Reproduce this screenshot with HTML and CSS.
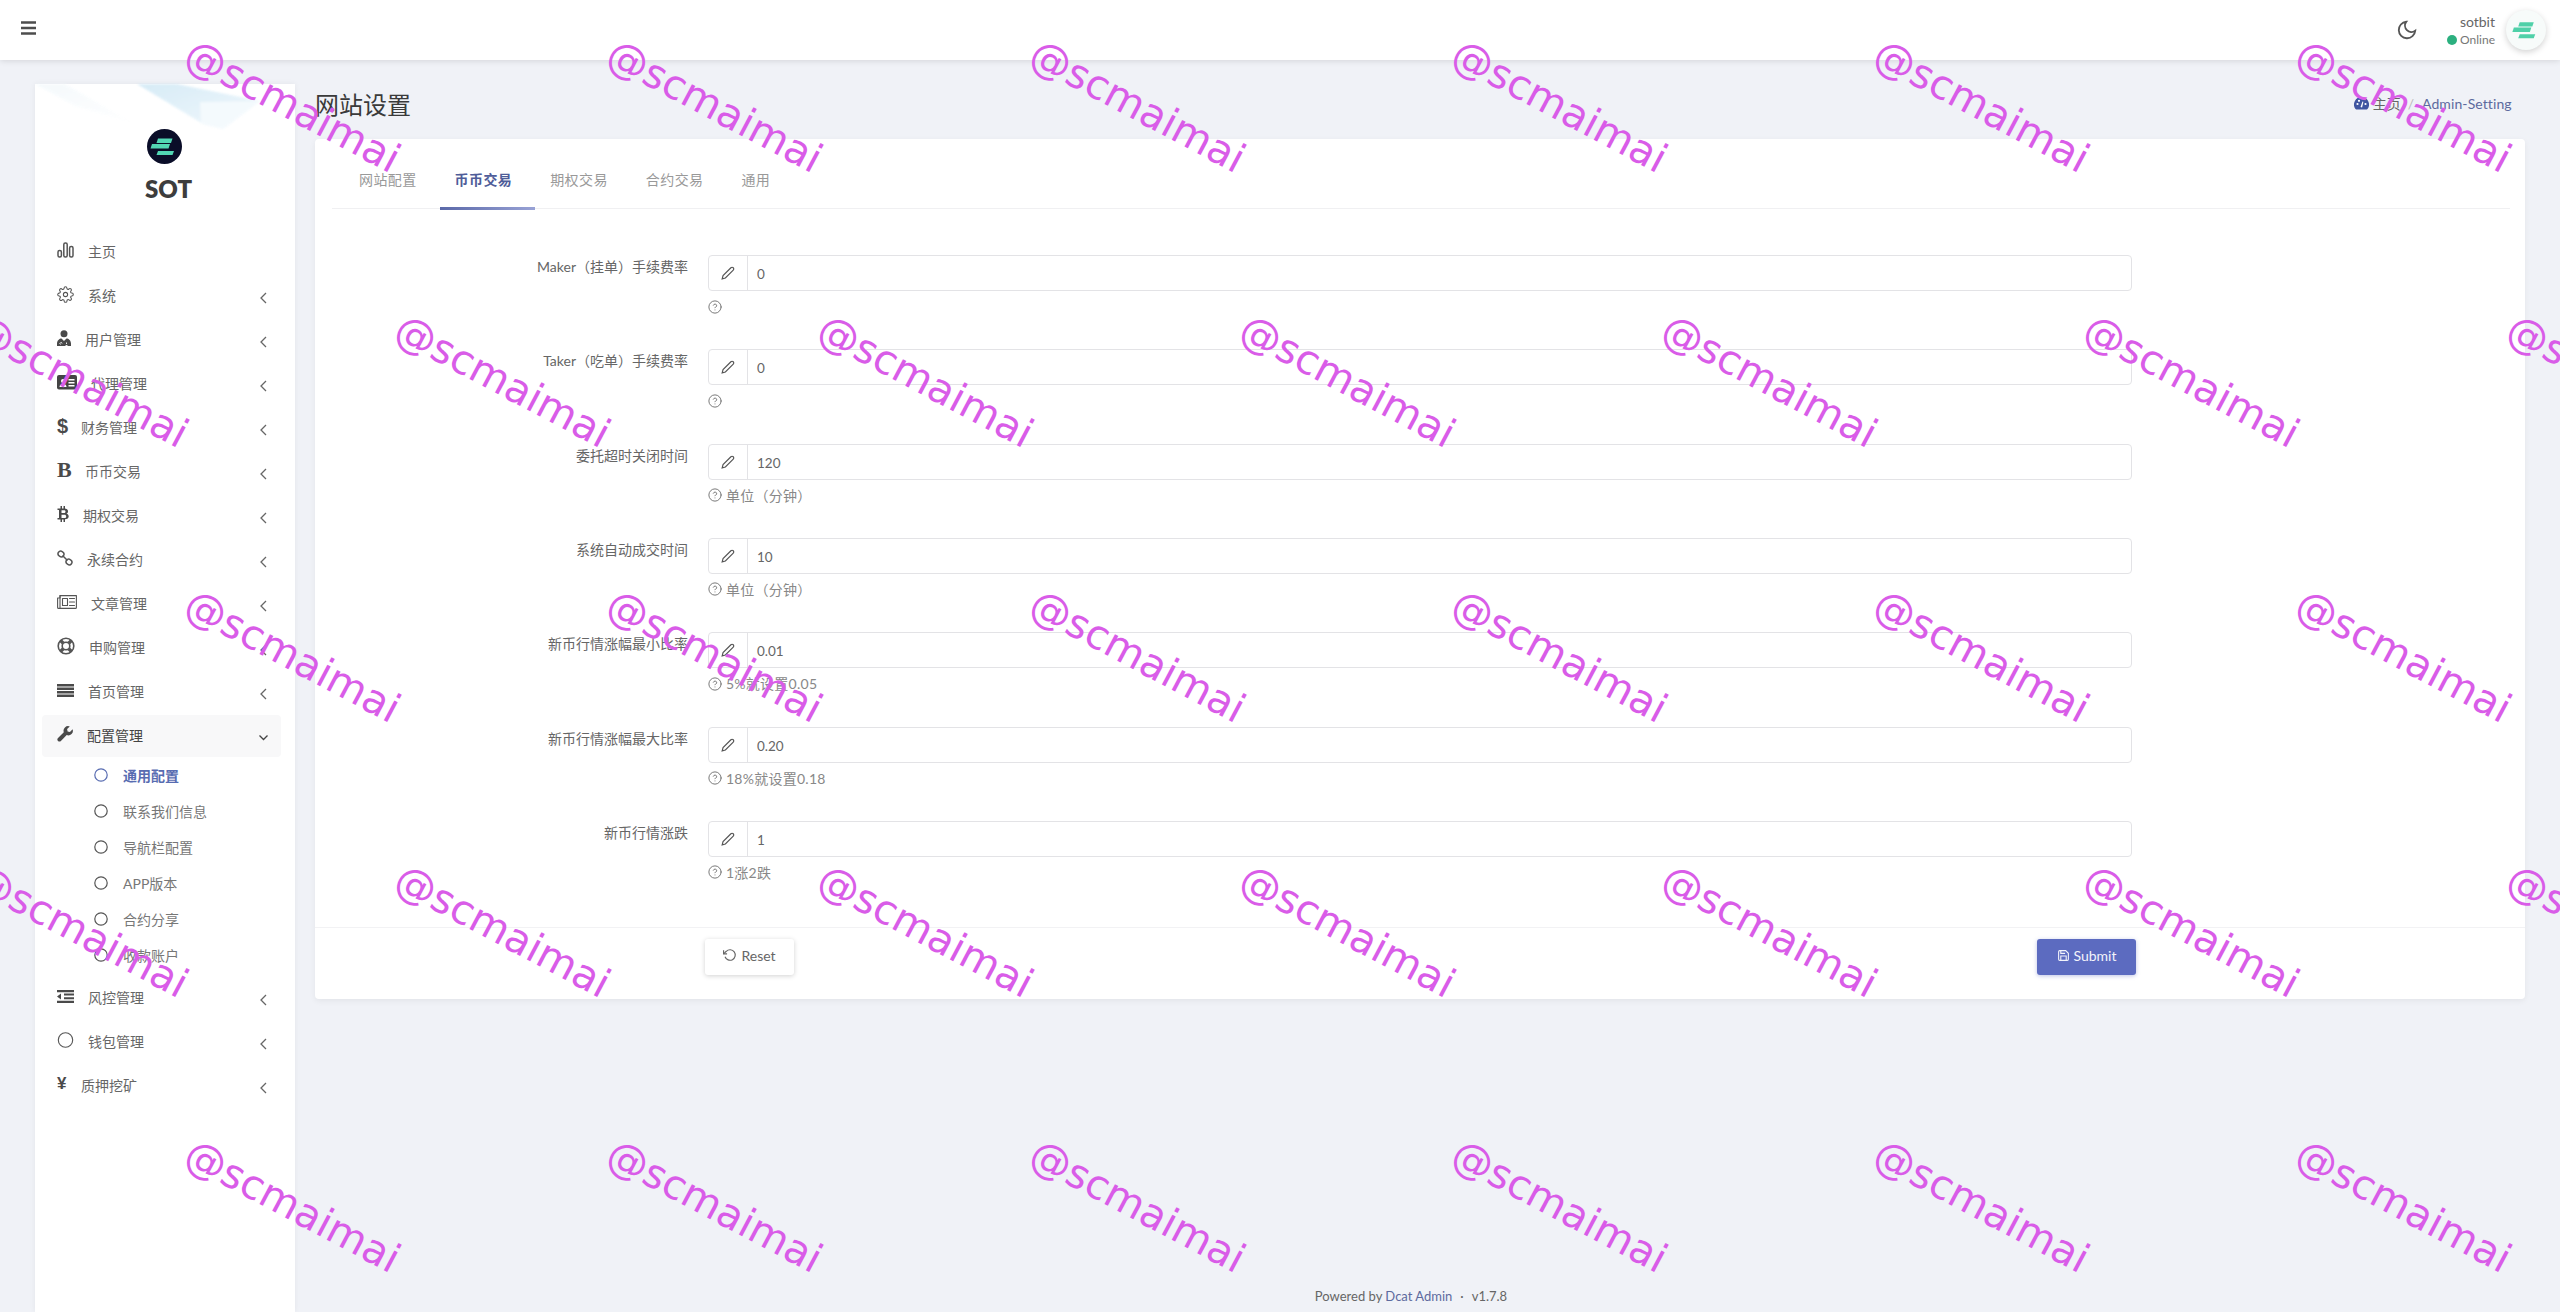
FILE: index.html
```html
<!DOCTYPE html>
<html lang="zh-CN">
<head>
<meta charset="utf-8">
<title>网站设置</title>
<link rel="stylesheet" href="styles.css">
</head>
<body>
<svg class="defs" width="0" height="0" aria-hidden="true">
  <symbol id="i-pen" viewBox="0 0 24 24"><path d="M17 3a2.828 2.828 0 1 1 4 4L7.500 20.500 2 22l1.500-5.500L17 3z"/></symbol>
  <symbol id="i-help" viewBox="0 0 24 24"><circle cx="12" cy="12" r="10.500"/><path d="M9.090 9a3 3 0 0 1 5.830 1c0 2-3 3-3 3"/><path d="M12 17h.01"/></symbol>
  <symbol id="i-left" viewBox="0 0 7 12"><path d="M6 1 1 6l5 5"/></symbol>
  <symbol id="i-ring" viewBox="0 0 14 14"><circle cx="7" cy="7" r="6.200"/></symbol>
  <symbol id="i-logo" viewBox="0 0 35 35"><path d="M11 9.500h14.500l-1.500 4.500H9.500z"/><path d="M5 15.500h18l-1.500 4.500H3.500z" transform="translate(0 -.5)"/><path d="M11 22h16l-1.500 4H9.500z"/></symbol>
</svg>

<header class="topbar">
  <svg class="burger" width="16" height="14" viewBox="0 0 16 14"><path d="M0 1.500h15M0 7h15M0 12.500h15"/></svg>
  <div class="top-right">
    <svg class="moon" width="22" height="22" viewBox="0 0 24 24"><path d="M21 12.790A9 9 0 1 1 11.210 3 7 7 0 0 0 21 12.790z"/></svg>
    <div class="user">
      <div class="user-name">sotbit</div>
      <div class="user-status"><i class="dot"></i>Online</div>
    </div>
    <div class="avatar"><svg class="avatar-logo" width="34" height="34"><use href="#i-logo"/></svg></div>
  </div>
</header>

<div class="shell">
  <aside class="sidebar">
    <svg class="wave" width="260" height="50" viewBox="0 0 260 50">
      <defs>
        <linearGradient id="wv" x1="0" y1="0" x2="1" y2="1"><stop offset="0" stop-color="#cde7f5"/><stop offset="1" stop-color="#eff7fc"/></linearGradient>
        <linearGradient id="wl" x1="0" y1="0" x2="1" y2="1"><stop offset="0" stop-color="#f3f9fc"/><stop offset="1" stop-color="#ffffff"/></linearGradient>
      </defs>
      <path d="M0 0h30l70 40L40 22z" fill="url(#wl)"/>
      <path d="M102 0h40l83 17-37 28-20-5z" fill="url(#wv)"/>
      <path d="M165 18l60-1-37 28-22-6z" fill="#f2f9fd"/>
    </svg>
    <div class="brand">
      <svg class="brand-logo" width="35" height="35" viewBox="0 0 35 35"><circle cx="17.500" cy="17.500" r="17.500" fill="#0a0d28"/><use href="#i-logo" width="35" height="35" class="teal"/></svg>
      <div class="brand-name">SOT</div>
    </div>
    <nav class="menu">
      <a class="item"><svg class="ic st" width="17" height="16" viewBox="0 0 17 16"><rect x="1" y="8.500" width="3.400" height="6.500" rx="1.500"/><rect x="6.800" y="1" width="3.400" height="14" rx="1.500"/><rect x="12.600" y="4.500" width="3.400" height="10.500" rx="1.500"/></svg><span>主页</span></a>
      <a class="item"><svg class="ic st" width="17" height="17" viewBox="0 0 24 24"><circle cx="12" cy="12" r="3"/><path d="M19.400 15a1.650 1.650 0 0 0 .33 1.820l.06.06a2 2 0 0 1 0 2.830 2 2 0 0 1-2.830 0l-.06-.06a1.650 1.650 0 0 0-1.820-.33 1.650 1.650 0 0 0-1 1.510V21a2 2 0 0 1-2 2 2 2 0 0 1-2-2v-.09A1.650 1.650 0 0 0 9 19.400a1.650 1.650 0 0 0-1.820.33l-.06.06a2 2 0 0 1-2.830 0 2 2 0 0 1 0-2.830l.06-.06a1.650 1.650 0 0 0 .33-1.820 1.650 1.650 0 0 0-1.510-1H3a2 2 0 0 1-2-2 2 2 0 0 1 2-2h.09A1.650 1.650 0 0 0 4.600 9a1.650 1.650 0 0 0-.33-1.820l-.06-.06a2 2 0 0 1 0-2.830 2 2 0 0 1 2.830 0l.06.06a1.650 1.650 0 0 0 1.820.33H9a1.650 1.650 0 0 0 1-1.510V3a2 2 0 0 1 2-2 2 2 0 0 1 2 2v.09a1.650 1.650 0 0 0 1 1.510 1.650 1.650 0 0 0 1.820-.33l.06-.06a2 2 0 0 1 2.830 0 2 2 0 0 1 0 2.830l-.06.06a1.650 1.650 0 0 0-.33 1.820V9a1.650 1.650 0 0 0 1.510 1H21a2 2 0 0 1 2 2 2 2 0 0 1-2 2h-.09a1.650 1.650 0 0 0-1.510 1z"/></svg><span>系统</span><svg class="chev" width="7" height="12"><use href="#i-left"/></svg></a>
      <a class="item"><svg class="ic fl" width="14" height="16" viewBox="0 0 14 16"><circle cx="7" cy="3.800" r="3.500"/><path d="M0 16v-2.500C0 10.500 2.500 8.500 4.500 8.500L7 11l2.500-2.500c2 0 4.500 2 4.500 5V16z"/><path d="M3.500 14.500a1 1 0 1 1 1.500-1M9.500 12.500v1.500M8.500 15.500h2" fill="none" stroke="#fff" stroke-width=".9"/></svg><span>用户管理</span><svg class="chev" width="7" height="12"><use href="#i-left"/></svg></a>
      <a class="item"><svg class="ic" width="20" height="15" viewBox="0 0 20 15"><rect width="20" height="14.500" rx="2" fill="#444"/><circle cx="6" cy="6" r="2" fill="#fff"/><path d="M2.500 12c0-2 1.500-3 3.500-3s3.500 1 3.500 3z" fill="#fff"/><path d="M11.500 4h6v1.500h-6zM11.500 7h6v1.500h-6zM11.500 10h6v1.500h-6z" fill="#fff"/></svg><span>代理管理</span><svg class="chev" width="7" height="12"><use href="#i-left"/></svg></a>
      <a class="item"><b class="ic glyph g-dollar">$</b><span>财务管理</span><svg class="chev" width="7" height="12"><use href="#i-left"/></svg></a>
      <a class="item"><b class="ic glyph g-b">B</b><span>币币交易</span><svg class="chev" width="7" height="12"><use href="#i-left"/></svg></a>
      <a class="item"><svg class="ic fl" width="12" height="16" viewBox="0 0 12 16"><path fill-rule="evenodd" d="M2.500 2.500H3.500V0H5v2.500h1.500V0H8v2.600c2 .3 3 1.400 3 2.900 0 1-.5 1.800-1.500 2.200 1.400.3 2.200 1.300 2.200 2.600 0 1.800-1.300 2.900-3.700 3V16H6.500v-2.500H5V16H3.500v-2.500H.5V12h1.500V4H.5V2.500zM4.500 4.300v2.800h2.400c1 0 1.600-.5 1.600-1.400s-.6-1.400-1.600-1.400zM4.500 8.700v3.400h2.900c1.100 0 1.800-.6 1.800-1.700s-.7-1.700-1.800-1.700z"/></svg><span>期权交易</span><svg class="chev" width="7" height="12"><use href="#i-left"/></svg></a>
      <a class="item"><svg class="ic st" width="16" height="16" viewBox="0 0 16 16"><ellipse cx="4" cy="4" rx="3" ry="2.700" transform="rotate(35 4 4)"/><ellipse cx="12" cy="12" rx="3" ry="2.700" transform="rotate(35 12 12)"/><path d="M6 6l4 4"/></svg><span>永续合约</span><svg class="chev" width="7" height="12"><use href="#i-left"/></svg></a>
      <a class="item"><svg class="ic st thin" width="20" height="14" viewBox="0 0 20 14"><path d="M3 .6h16.400v11.800a1 1 0 0 1-1 1H1.600a1 1 0 0 1-1-1V3H3z"/><path d="M3 .6v12.800M5.500 3.500h5v7h-5zM12.500 3.500h5M12.500 7h5M12.500 10.500h5"/></svg><span>文章管理</span><svg class="chev" width="7" height="12"><use href="#i-left"/></svg></a>
      <a class="item"><svg class="ic st" width="18" height="18" viewBox="0 0 18 18"><circle cx="9" cy="9" r="7.800" stroke-width="1.600"/><circle cx="9" cy="9" r="3.800" stroke-width="1.600"/><path d="M3.500 3.500l2.800 2.800M14.500 3.500l-2.800 2.800M3.500 14.500l2.800-2.800M14.500 14.500l-2.800-2.800" stroke-width="3.400" stroke-linecap="butt"/></svg><span>申购管理</span><svg class="chev" width="7" height="12"><use href="#i-left"/></svg></a>
      <a class="item"><svg class="ic fl" width="17" height="13" viewBox="0 0 17 13"><path d="M0 0h17v2.500H0zM0 3.500h17V6H0zM0 7h17v2.500H0zM0 10.500h17V13H0z"/></svg><span>首页管理</span><svg class="chev" width="7" height="12"><use href="#i-left"/></svg></a>
      <a class="item active"><svg class="ic fl" width="16" height="16" viewBox="0 0 16 16"><path d="M15.600 3.200l-2.700 2.700-2.300-.5-.5-2.300L12.800.4a4.600 4.600 0 0 0-6 5.800L1 12c-.9.9-.9 2 0 2.900s2 .9 2.900 0l5.800-5.800a4.600 4.600 0 0 0 5.900-5.900z"/></svg><span>配置管理</span><svg class="chev down" width="9" height="6" viewBox="0 0 9 6"><path d="M.5.5l4 4 4-4"/></svg></a>
      <div class="submenu">
        <a class="sub current"><svg class="sub-ring" width="14" height="14"><use href="#i-ring"/></svg><span>通用配置</span></a>
        <a class="sub"><svg class="sub-ring" width="14" height="14"><use href="#i-ring"/></svg><span>联系我们信息</span></a>
        <a class="sub"><svg class="sub-ring" width="14" height="14"><use href="#i-ring"/></svg><span>导航栏配置</span></a>
        <a class="sub"><svg class="sub-ring" width="14" height="14"><use href="#i-ring"/></svg><span>APP版本</span></a>
        <a class="sub"><svg class="sub-ring" width="14" height="14"><use href="#i-ring"/></svg><span>合约分享</span></a>
        <a class="sub"><svg class="sub-ring" width="14" height="14"><use href="#i-ring"/></svg><span>收款账户</span></a>
      </div>
      <a class="item"><svg class="ic fl" width="17" height="13" viewBox="0 0 17 13"><path d="M0 0h17v2.200H0zM7 3.600h10v2H7zM7 7.200h10v2H7zM0 10.800h17V13H0zM4 3.500v6L0 6.500z"/></svg><span>风控管理</span><svg class="chev" width="7" height="12"><use href="#i-left"/></svg></a>
      <a class="item"><svg class="ic st thin" width="17" height="16" viewBox="0 0 16 16"><circle cx="8" cy="8" r="7.200"/></svg><span>钱包管理</span><svg class="chev" width="7" height="12"><use href="#i-left"/></svg></a>
      <a class="item"><b class="ic glyph g-yen">¥</b><span>质押挖矿</span><svg class="chev" width="7" height="12"><use href="#i-left"/></svg></a>
    </nav>
  </aside>

  <main class="content">
    <div class="page-head">
      <h1 class="page-title">网站设置</h1>
      <div class="crumbs">
        <svg class="crumb-ic" width="15" height="13" viewBox="0 0 15 13"><path d="M7.500 0A7.500 7.500 0 0 0 1.500 12a1 1 0 0 0 .8.500h10.400a1 1 0 0 0 .8-.5A7.500 7.500 0 0 0 7.500 0z"/><circle cx="3.500" cy="7" r="1.100" fill="#fff"/><circle cx="5" cy="3.800" r="1.100" fill="#fff"/><circle cx="11.500" cy="7" r="1.100" fill="#fff"/><path d="M6.500 10l2-5.500 .9.300-1.300 5.700z" fill="#fff"/></svg>
        <span class="crumb-home">主页</span><span class="crumb-sep">/</span><span class="crumb-cur">Admin-Setting</span>
      </div>
    </div>

    <section class="card">
      <div class="tabs">
        <a class="tab">网站配置</a>
        <a class="tab on">币币交易</a>
        <a class="tab">期权交易</a>
        <a class="tab">合约交易</a>
        <a class="tab">通用</a>
      </div>
      <form class="form">
        <div class="field"><label class="lbl">Maker（挂单）手续费率</label><div class="ctl"><div class="group"><span class="addon"><svg class="pen" width="14" height="14"><use href="#i-pen"/></svg></span><span class="val">0</span></div><div class="help"><svg class="q" width="14" height="14"><use href="#i-help"/></svg></div></div></div>
        <div class="field"><label class="lbl">Taker（吃单）手续费率</label><div class="ctl"><div class="group"><span class="addon"><svg class="pen" width="14" height="14"><use href="#i-pen"/></svg></span><span class="val">0</span></div><div class="help"><svg class="q" width="14" height="14"><use href="#i-help"/></svg></div></div></div>
        <div class="field"><label class="lbl">委托超时关闭时间</label><div class="ctl"><div class="group"><span class="addon"><svg class="pen" width="14" height="14"><use href="#i-pen"/></svg></span><span class="val">120</span></div><div class="help"><svg class="q" width="14" height="14"><use href="#i-help"/></svg>单位（分钟）</div></div></div>
        <div class="field"><label class="lbl">系统自动成交时间</label><div class="ctl"><div class="group"><span class="addon"><svg class="pen" width="14" height="14"><use href="#i-pen"/></svg></span><span class="val">10</span></div><div class="help"><svg class="q" width="14" height="14"><use href="#i-help"/></svg>单位（分钟）</div></div></div>
        <div class="field"><label class="lbl">新币行情涨幅最小比率</label><div class="ctl"><div class="group"><span class="addon"><svg class="pen" width="14" height="14"><use href="#i-pen"/></svg></span><span class="val">0.01</span></div><div class="help"><svg class="q" width="14" height="14"><use href="#i-help"/></svg>5%就设置0.05</div></div></div>
        <div class="field"><label class="lbl">新币行情涨幅最大比率</label><div class="ctl"><div class="group"><span class="addon"><svg class="pen" width="14" height="14"><use href="#i-pen"/></svg></span><span class="val">0.20</span></div><div class="help"><svg class="q" width="14" height="14"><use href="#i-help"/></svg>18%就设置0.18</div></div></div>
        <div class="field"><label class="lbl">新币行情涨跌</label><div class="ctl"><div class="group"><span class="addon"><svg class="pen" width="14" height="14"><use href="#i-pen"/></svg></span><span class="val">1</span></div><div class="help"><svg class="q" width="14" height="14"><use href="#i-help"/></svg>1涨2跌</div></div></div>
      </form>
      <div class="actions">
        <button class="btn reset" type="button"><svg class="btn-ic" width="14" height="14" viewBox="0 0 24 24"><path d="M1 4v6h6"/><path d="M3.510 15a9 9 0 1 0 2.130-9.360L1 10"/></svg>Reset</button>
        <button class="btn submit" type="button"><svg class="btn-ic" width="13" height="13" viewBox="0 0 24 24"><path d="M19 21H5a2 2 0 0 1-2-2V5a2 2 0 0 1 2-2h11l5 5v11a2 2 0 0 1-2 2z"/><path d="M17 21v-8H7v8M7 3v5h8"/></svg>Submit</button>
      </div>
    </section>

    <footer class="foot">Powered by <a class="foot-link">Dcat Admin</a><span class="foot-dot">·</span>v1.7.8</footer>
  </main>
</div>

<div class="wm" aria-hidden="true">
  <div class="wm-row odd"><span>@scmaimai</span><span>@scmaimai</span><span>@scmaimai</span><span>@scmaimai</span><span>@scmaimai</span><span>@scmaimai</span></div>
  <div class="wm-row even"><span>@scmaimai</span><span>@scmaimai</span><span>@scmaimai</span><span>@scmaimai</span><span>@scmaimai</span><span>@scmaimai</span><span>@scmaimai</span></div>
  <div class="wm-row odd"><span>@scmaimai</span><span>@scmaimai</span><span>@scmaimai</span><span>@scmaimai</span><span>@scmaimai</span><span>@scmaimai</span></div>
  <div class="wm-row even"><span>@scmaimai</span><span>@scmaimai</span><span>@scmaimai</span><span>@scmaimai</span><span>@scmaimai</span><span>@scmaimai</span><span>@scmaimai</span></div>
  <div class="wm-row odd"><span>@scmaimai</span><span>@scmaimai</span><span>@scmaimai</span><span>@scmaimai</span><span>@scmaimai</span><span>@scmaimai</span></div>
</div>
</body>
</html>
```
FILE: styles.css
```css
* { box-sizing: border-box; }
html, body { margin: 0; height: 100%; }
body {
  position: relative;
  height: 1312px;
  overflow: hidden;
  display: flex;
  flex-direction: column;
  background: #f0f2f7;
  color: #555;
  font: 14px/21px Lato, "Noto Sans CJK SC", sans-serif;
}
.defs { position: absolute; }
a { color: inherit; text-decoration: none; }

/* top bar */
.topbar {
  flex: none;
  position: relative;
  z-index: 2;
  height: 60px;
  display: flex;
  align-items: center;
  justify-content: space-between;
  padding: 0 14px 0 21px;
  background: #fff;
  box-shadow: 0 1px 6px rgba(0,0,0,.12);
}
.burger { fill: none; stroke: #4d4d4d; stroke-width: 2.400; margin-top: -5px; }
.top-right { display: flex; align-items: center; }
.moon { fill: none; stroke: #555; stroke-width: 2; margin-right: 29px; }
.user { text-align: right; margin-right: 11px; }
.user-name { font-size: 14px; line-height: 19px; color: #666; }
.user-status { display: flex; align-items: center; justify-content: flex-end; font-size: 12px; line-height: 18px; color: #777; }
.dot { width: 10px; height: 10px; margin-right: 3px; border-radius: 50%; background: #2cb07f; }
.avatar {
  width: 40px; height: 40px;
  display: flex; align-items: center; justify-content: center;
  border-radius: 50%;
  background: #f7fbfa;
  box-shadow: 0 2px 6px rgba(0,0,0,.18);
}
.avatar-logo { fill: #4fd0a8; }

/* layout */
.shell { flex: 1; display: flex; min-height: 0; }

/* sidebar */
.sidebar {
  position: relative;
  flex: none;
  width: 260px;
  margin: 24px 0 0 35px;
  background: #fff;
  box-shadow: 0 0 6px rgba(0,0,0,.06);
}
.wave { position: absolute; left: 0; top: 0; filter: blur(.8px); opacity: .8; }
.brand { position: relative; height: 146px; padding-top: 45px; text-align: center; }
.brand-logo { display: block; margin: 0 auto; transform: translateX(-1px); }
.teal { fill: #52d6b4; }
.brand-name { margin-top: 7px; padding-left: 7px; font-size: 24px; line-height: 36px; font-weight: 800; color: #3d3d3d; }
.menu { display: flex; flex-direction: column; }
.item {
  display: flex;
  align-items: center;
  flex: none;
  width: 239px;
  height: 42px;
  margin: 1px 0 1px 7px;
  padding: 0 14px 0 15px;
  border-radius: 4px;
  color: #666;
}
.item span { margin-top: -2px; }
.item.active { background: #f8f8f9; color: #444; }
.ic { flex: none; margin-right: 14px; margin-top: -4px; }
.st { fill: none; stroke: #555; stroke-width: 1.500; stroke-linecap: round; stroke-linejoin: round; }
.thin { stroke-width: 1.100; }
.fl { fill: #4a4a4a; }
.glyph { display: block; text-align: left; color: #4a4a4a; line-height: 20px; }
.g-dollar { width: 10px; font: 700 20px/20px "Liberation Sans", sans-serif; }
.g-b { width: 14px; font: 700 22px/20px "Liberation Serif", serif; }
.g-yen { width: 10px; font: 700 17px/20px "Liberation Sans", sans-serif; }
.chev { margin: 3px 0 0 auto; fill: none; stroke: #666; stroke-width: 1.300; }
.chev.down { stroke: #444; margin-right: -1px; }
.submenu { margin: -1px 0 3px; }
.sub { display: flex; align-items: center; height: 36px; padding-left: 59px; color: #777; }
.sub-ring { flex: none; margin: -1px 15px 0 0; fill: none; stroke: #555; stroke-width: 1.200; }
.sub.current { color: #586cb1; font-weight: 700; }
.sub.current .sub-ring { stroke: #586cb1; }

/* content */
.content { flex: 1; min-width: 0; display: flex; flex-direction: column; margin: 0 35px 0 20px; }
.page-head { flex: none; height: 79px; padding-top: 10px; display: flex; align-items: center; justify-content: space-between; }
.page-title { margin: 0; font-size: 24px; line-height: 36px; font-weight: 400; color: #3a3a3a; }
.crumbs { display: flex; align-items: center; margin: -2px 13px 0 0; color: #5d6a9e; }
.crumb-ic { fill: #3f55a0; margin-right: 4px; }
.crumb-home { color: #666; }
.crumb-sep { margin: 0 8px 0 7px; color: #bbb; }
.crumb-cur { width: 90px; white-space: nowrap; letter-spacing: .1px; }

.card {
  flex: none;
  height: 860px;
  background: #fff;
  border-radius: 4px;
  box-shadow: 0 2px 6px rgba(0,0,0,.06);
  display: flex;
  flex-direction: column;
}
.tabs {
  flex: none;
  height: 70px;
  margin: 0 15px 0 17px;
  padding: 20px 0 0 12px;
  display: flex;
  border-bottom: 1px solid #f0f0f2;
}
.tab { height: 50px; padding: 10px 23px 0 15px; color: #999; letter-spacing: .4px; }
.tab.on {
  height: 51px;
  color: #4f5d99;
  font-weight: 700;
  border-bottom: 3px solid;
  border-image: linear-gradient(90deg, #5a68a8, #99a3d6) 1;
}
.form { flex: none; padding-top: 46px; height: 718px; }
.field { display: flex; height: 94.330px; }
.lbl { flex: none; width: 373px; margin-right: 20px; text-align: right; color: #666; line-height: 23px; }
.ctl { width: 1424px; }
.group { display: flex; height: 36px; border: 1px solid #e3e3e6; border-radius: 4px; }
.addon { flex: none; width: 39px; display: flex; align-items: center; justify-content: center; border-right: 1px solid #e3e3e6; }
.pen { fill: none; stroke: #555; stroke-width: 2; }
.val { padding-left: 9px; line-height: 36px; font-size: 13.500px; color: #666; }
.help { display: flex; align-items: center; height: 21px; margin-top: 5px; color: #888; white-space: nowrap; letter-spacing: .25px; }
.q { flex: none; margin-right: 4px; fill: none; stroke: #777; stroke-width: 1.700; stroke-linecap: round; }

.actions {
  flex: 1;
  display: flex;
  align-items: flex-start;
  justify-content: space-between;
  padding: 11px 389px 0 390px;
  border-top: 1px solid #f2f2f4;
}
.btn {
  display: flex; align-items: center; justify-content: center;
  height: 36px;
  padding: 0 0 4px;
  border: 0;
  border-radius: 3px;
  font: inherit;
}
.btn-ic { fill: none; stroke: currentColor; stroke-width: 2; margin-right: 4px; }
.reset { width: 89px; background: #fff; color: #666; box-shadow: 0 1px 5px rgba(0,0,0,.18); }
.submit { width: 99px; background: #5c6bc0; color: #f3f4fb; box-shadow: 0 1px 4px rgba(92,107,192,.4); }

.foot { margin: auto 0 6px; text-align: center; font-size: 13px; line-height: 20px; color: #666; padding-right: 18px; }
.foot-link { color: #5d6a9e; }
.foot-dot { margin: 0 8px; }

/* watermark overlay */
.wm {
  position: absolute;
  inset: 0;
  z-index: 5;
  overflow: hidden;
  pointer-events: none;
  padding-top: 30px;
  display: flex;
  flex-direction: column;
}
.wm-row { flex: none; height: 275px; display: flex; }
.wm-row.odd { padding-left: 185px; }
.wm-row.even { margin-left: -27px; }
.wm-row span {
  flex: none;
  width: 422.300px;
  font: 40.800px/46px "DejaVu Sans", sans-serif;
  color: #d95ce8;
  white-space: nowrap;
  transform-origin: 0 0;
  transform: translate(14px, 0) rotate(28deg);
}
```
